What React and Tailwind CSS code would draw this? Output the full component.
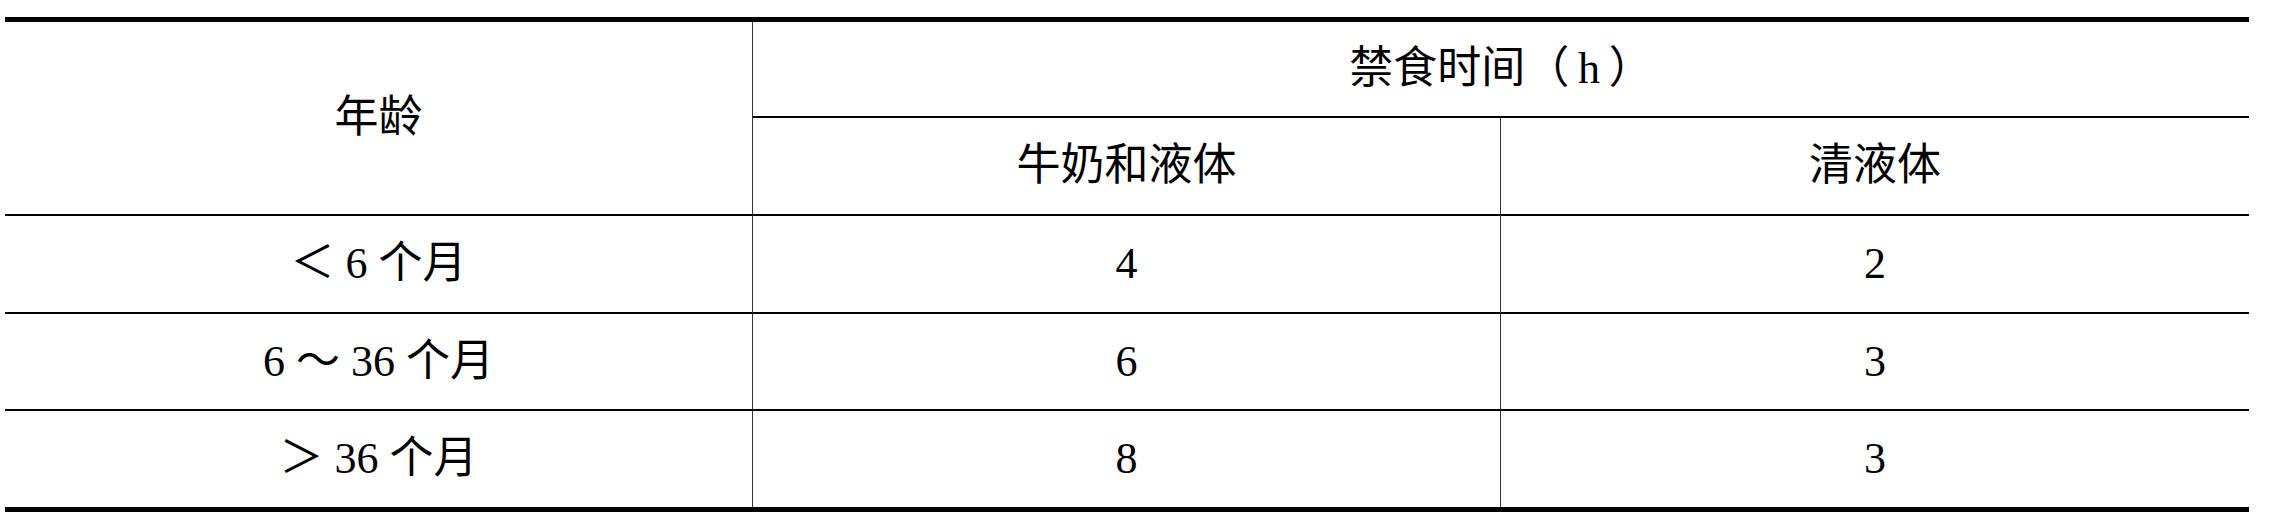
import React from 'react'

const rows = [
    { age: '＜ 6 个月', milk: '4', clear: '2', h: 'h-[98px]', last: false },
    { age: '6 ～ 36 个月', milk: '6', clear: '3', h: 'h-[97px]', last: false },
    { age: '＞ 36 个月', milk: '8', clear: '3', h: 'h-[96px]', last: true },
]

function Cell({ children, className = '' }) {
    return (
        <div className={`flex items-center justify-center leading-none ${className}`}>
            {children}
        </div>
    )
}

function App() {
    return (
        <div
            className="w-[2280px] h-[528px] bg-white pt-[17px] pl-[5px] text-black text-[44px]"
            style={{ fontFamily: '"Liberation Serif", "Noto Sans CJK SC", serif' }}
        >
            <div className="w-[2244px] border-t-[5px] border-b-[5px] border-black grid grid-cols-3">
                {/* header */}
                <Cell className="row-span-2 border-r border-r-[#333] border-b-2 border-b-black">年龄</Cell>
                <Cell className="col-span-2 h-[96px] border-b-2 border-black">禁食时间（{'\u2009'}h{'\u2009'}）</Cell>
                <Cell className="h-[98px] border-r border-r-[#333] border-b-2 border-b-black">牛奶和液体</Cell>
                <Cell className="h-[98px] border-b-2 border-black">清液体</Cell>

                {/* body */}
                {rows.map((r, i) => (
                    <React.Fragment key={i}>
                        <Cell className={`${r.h} border-r border-r-[#333] ${r.last ? '' : 'border-b-2 border-b-black'}`}>{r.age}</Cell>
                        <Cell className={`${r.h} border-r border-r-[#333] ${r.last ? '' : 'border-b-2 border-b-black'}`}>{r.milk}</Cell>
                        <Cell className={`${r.h} ${r.last ? '' : 'border-b-2 border-b-black'}`}>{r.clear}</Cell>
                    </React.Fragment>
                ))}
            </div>
        </div>
    )
}

export default App
